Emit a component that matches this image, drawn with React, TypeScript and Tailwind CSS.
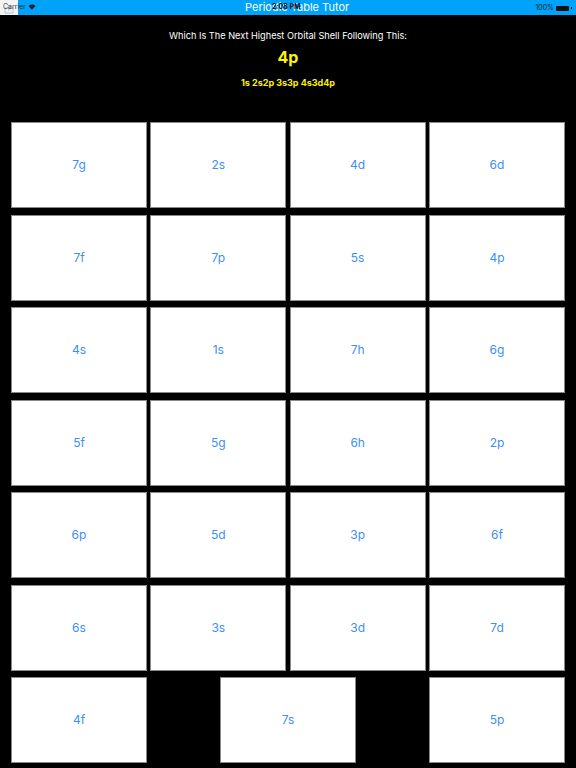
const rows: string[][] = [
  ['7g', '2s', '4d', '6d'],
  ['7f', '7p', '5s', '4p'],
  ['4s', '1s', '7h', '6g'],
  ['5f', '5g', '6h', '2p'],
  ['6p', '5d', '3p', '6f'],
  ['6s', '3s', '3d', '7d'],
];

const lastRow = ['4f', '7s', '5p'];

function Tile({ label }: { label: string }) {
  return (
    <button className="flex h-[86px] w-[136px] items-center justify-center border border-[#8a8a8a] bg-white text-[12px] text-[#3d8ef7]">
      {label}
    </button>
  );
}

function StatusBar() {
  return (
    <div className="relative flex h-[15px] items-center bg-[#00a2fa] text-[7px]">
      <div className="flex h-[15px] w-[18px] items-end justify-center bg-[#f4f4f4]">
        <svg width="10" height="9" viewBox="0 0 10 9" className="mb-[1px]">
          <path d="M2 3 H1 V8 H9 V3 H8" fill="none" stroke="#9bbce0" strokeWidth="0.8" />
          <path d="M5 6 V0.5 M3.3 2 L5 0.5 L6.7 2" fill="none" stroke="#9bbce0" strokeWidth="0.8" />
        </svg>
      </div>
      <span className="absolute left-[3px] top-[2px] text-[#333]">Carrier</span>
      <svg width="8" height="6" viewBox="0 0 8 6" className="absolute left-[28px] top-[4px]">
        <path d="M0.5 2 A5 5 0 0 1 7.5 2 L4 5.8 Z" fill="#222" />
      </svg>
      <span className="absolute left-[245px] top-[1px] text-[11px] leading-[13px] text-white">
        Periodic Table Tutor
      </span>
      <span className="absolute left-[272px] top-[2px] font-semibold text-black">2:08 PM</span>
      <div className="absolute right-[4px] top-[3px] flex items-center gap-[2px] text-[#222]">
        <span>100%</span>
        <span className="h-[5px] w-[13px] rounded-[1px] bg-[#111]" />
        <span className="h-[2px] w-[1px] bg-[#111]" />
      </div>
    </div>
  );
}

export default function App() {
  return (
    <div
      className="h-[768px] w-[576px] overflow-hidden bg-black"
      style={{ fontFamily: '"Inter", "Liberation Sans", sans-serif' }}
    >
      <StatusBar />
      <div className="flex flex-col items-center">
        <p className="mt-[14px] text-[9.2px] leading-[13px] text-white">
          Which Is The Next Highest Orbital Shell Following This:
        </p>
        <p className="mt-[5px] text-[16px] font-bold leading-[20px] text-[#fff200]">4p</p>
        <p className="mt-[10px] text-[9px] font-bold leading-[12px] text-[#fff200]">
          1s 2s2p 3s3p 4s3d4p
        </p>
      </div>
      <div className="mt-[33px] flex flex-col gap-[6.5px] px-[11px]">
        {rows.map((row, i) => (
          <div key={i} className="flex justify-between">
            {row.map((label) => (
              <Tile key={label} label={label} />
            ))}
          </div>
        ))}
        <div className="flex justify-between">
          {lastRow.map((label) => (
            <Tile key={label} label={label} />
          ))}
        </div>
      </div>
    </div>
  );
}
